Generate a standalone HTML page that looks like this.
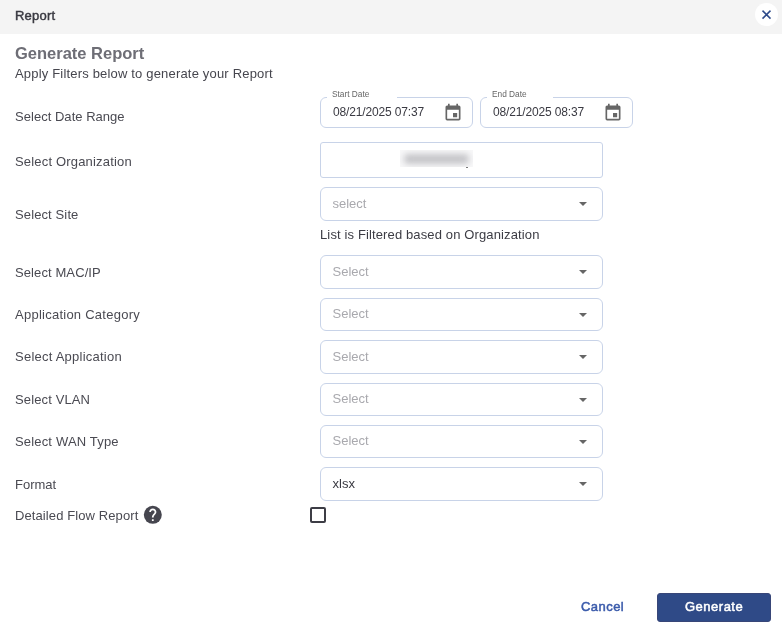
<!DOCTYPE html>
<html><head><meta charset="utf-8">
<style>
*{box-sizing:border-box;margin:0;padding:0}
html,body{width:782px;height:625px;overflow:hidden;background:#fff;font-family:"Liberation Sans",sans-serif;}
.abs{position:absolute;white-space:nowrap}
.hdr{position:absolute;left:0;top:0;width:782px;height:34px;background:#f4f4f4}
.ttl{left:15px;top:8px;font-size:13px;color:#3a3a42;-webkit-text-stroke:0.45px #3a3a42;letter-spacing:0.2px}
.close{position:absolute;left:755px;top:3px;width:23px;height:23px;border-radius:50%;background:#fff}
.h2{left:15px;top:44px;font-size:16.5px;font-weight:bold;color:#6e6e76}
.sub{left:15px;top:66px;font-size:13px;color:#46464e;letter-spacing:0.18px}
.lbl{left:15px;font-size:13px;color:#4a4a52}
.box{position:absolute;border:1px solid #c8d3e8;background:#fff;border-radius:6px}
.ph{position:absolute;left:11.5px;font-size:13px;color:#a9a9ae}
.arr{position:absolute;left:258.4px;width:0;height:0;border-left:4.6px solid transparent;border-right:4.6px solid transparent;border-top:4.8px solid #666}
.legend{position:absolute;top:-9px;left:6px;padding:0 0 0 5px;background:#fff;font-size:8.3px;color:#666;line-height:10px}
.val{position:absolute;left:12px;font-size:12px;color:#3a3a42;letter-spacing:-0.15px}
</style></head><body><div style="position:absolute;left:0;top:0;width:782px;height:625px;will-change:transform">
<div class="hdr"></div>
<div class="abs ttl">Report</div>
<div class="close"><svg width="23" height="23" viewBox="0 0 23 23"><path d="M7.5 7.6L15.5 15.6M15.5 7.6L7.5 15.6" stroke="#2d4a8a" stroke-width="1.5" stroke-linecap="butt"/></svg></div>

<div class="abs h2">Generate Report</div>
<div class="abs sub">Apply Filters below to generate your Report</div>

<div class="abs lbl" style="top:109px;letter-spacing:0.03px">Select Date Range</div>
<div class="abs lbl" style="top:154px;letter-spacing:0.18px">Select Organization</div>
<div class="abs lbl" style="top:207px;letter-spacing:0.12px">Select Site</div>
<div class="abs lbl" style="top:265px;letter-spacing:0.1px">Select MAC/IP</div>
<div class="abs lbl" style="top:307px;letter-spacing:0.25px">Application Category</div>
<div class="abs lbl" style="top:349px;letter-spacing:0.24px">Select Application</div>
<div class="abs lbl" style="top:392px;letter-spacing:0.13px">Select VLAN</div>
<div class="abs lbl" style="top:434px;letter-spacing:0.17px">Select WAN Type</div>
<div class="abs lbl" style="top:477px;letter-spacing:0px">Format</div>
<div class="abs lbl" style="top:508px;letter-spacing:0.1px">Detailed Flow Report</div>

<!-- date boxes -->
<div class="box" style="left:320px;top:97px;width:153px;height:31px">
  <div class="legend" style="width:70px">Start Date</div>
  <div class="val" style="top:7px">08/21/2025 07:37</div>
  <svg style="position:absolute;left:122px;top:5px" width="20" height="20" viewBox="0 0 24 24"><path fill="#666" d="M17 12h-5v5h5v-5zM16 1v2H8V1H6v2H5c-1.11 0-1.99.9-1.99 2L3 19a2 2 0 0 0 2 2h14c1.1 0 2-.9 2-2V5c0-1.1-.9-2-2-2h-1V1h-2zm3 18H5V8h14v11z"/></svg>
</div>
<div class="box" style="left:480px;top:97px;width:153px;height:31px">
  <div class="legend" style="width:66px">End Date</div>
  <div class="val" style="top:7px">08/21/2025 08:37</div>
  <svg style="position:absolute;left:122px;top:5px" width="20" height="20" viewBox="0 0 24 24"><path fill="#666" d="M17 12h-5v5h5v-5zM16 1v2H8V1H6v2H5c-1.11 0-1.99.9-1.99 2L3 19a2 2 0 0 0 2 2h14c1.1 0 2-.9 2-2V5c0-1.1-.9-2-2-2h-1V1h-2zm3 18H5V8h14v11z"/></svg>
</div>

<!-- org -->
<div class="box" style="left:320px;top:142px;width:283px;height:36px;border-radius:3px">
  <div style="position:absolute;left:79px;top:7px;width:73px;height:17px;overflow:hidden;background:#f8f8f9"><div style="position:absolute;left:4px;top:4px;width:65px;height:10px;background:#c4c4c8;border-radius:4px;filter:blur(3px)"></div></div><div style="position:absolute;left:144.5px;top:23.5px;width:2.5px;height:1.4px;background:#666;border-radius:1px"></div>
</div>

<!-- site -->
<div class="box" style="left:320px;top:187px;width:283px;height:34px">
  <div class="ph" style="top:8px">select</div>
  <div class="arr" style="top:14px"></div>
</div>
<div class="abs" style="left:320px;top:227px;font-size:13px;color:#3c3c44;letter-spacing:0.13px">List is Filtered based on Organization</div>

<div class="box" style="left:320px;top:255px;width:283px;height:34px"><div class="ph" style="top:8px">Select</div><div class="arr" style="top:14px"></div></div>
<div class="box" style="left:320px;top:298px;width:283px;height:33px"><div class="ph" style="top:7px">Select</div><div class="arr" style="top:14px"></div></div>
<div class="box" style="left:320px;top:340px;width:283px;height:34px"><div class="ph" style="top:8px">Select</div><div class="arr" style="top:14px"></div></div>
<div class="box" style="left:320px;top:383px;width:283px;height:33px"><div class="ph" style="top:7px">Select</div><div class="arr" style="top:14px"></div></div>
<div class="box" style="left:320px;top:425px;width:283px;height:33px"><div class="ph" style="top:7px">Select</div><div class="arr" style="top:14px"></div></div>
<div class="box" style="left:320px;top:467px;width:283px;height:34px"><div class="ph" style="top:8px;color:#3a3a42">xlsx</div><div class="arr" style="top:14px"></div></div>

<!-- help icon -->
<svg style="position:absolute;left:142px;top:503.8px" width="21.6" height="21.6" viewBox="0 0 24 24"><circle cx="12" cy="12" r="10" fill="#46464f"/><path fill="#fff" d="M13 19h-2v-2h2v2zm2.07-7.75l-.9.92C13.450 12.900 13 13.5 13 15h-2v-.5c0-1.1.45-2.1 1.170-2.830l1.24-1.26c.37-.36.59-.86.59-1.41 0-1.1-.9-2-2-2s-2 .9-2 2H8c0-2.21 1.79-4 4-4s4 1.790 4 4c0 .88-.36 1.68-.93 2.25z"/></svg>
<!-- checkbox -->
<div style="position:absolute;left:310px;top:507px;width:16px;height:16px;border:2px solid #3d3d45;border-radius:2px"></div>

<div class="abs" style="left:581px;top:599px;font-size:13px;color:#3b5bab;-webkit-text-stroke:0.5px #3b5bab;letter-spacing:0.45px">Cancel</div>
<div style="position:absolute;left:657px;top:593px;width:114px;height:29px;background:#2f4a87;border-radius:3px;border:1px solid #384678"></div>
<div class="abs" style="left:685px;top:599px;font-size:13px;color:#fff;-webkit-text-stroke:0.5px #fff;letter-spacing:0.5px">Generate</div>
</div></body></html>
